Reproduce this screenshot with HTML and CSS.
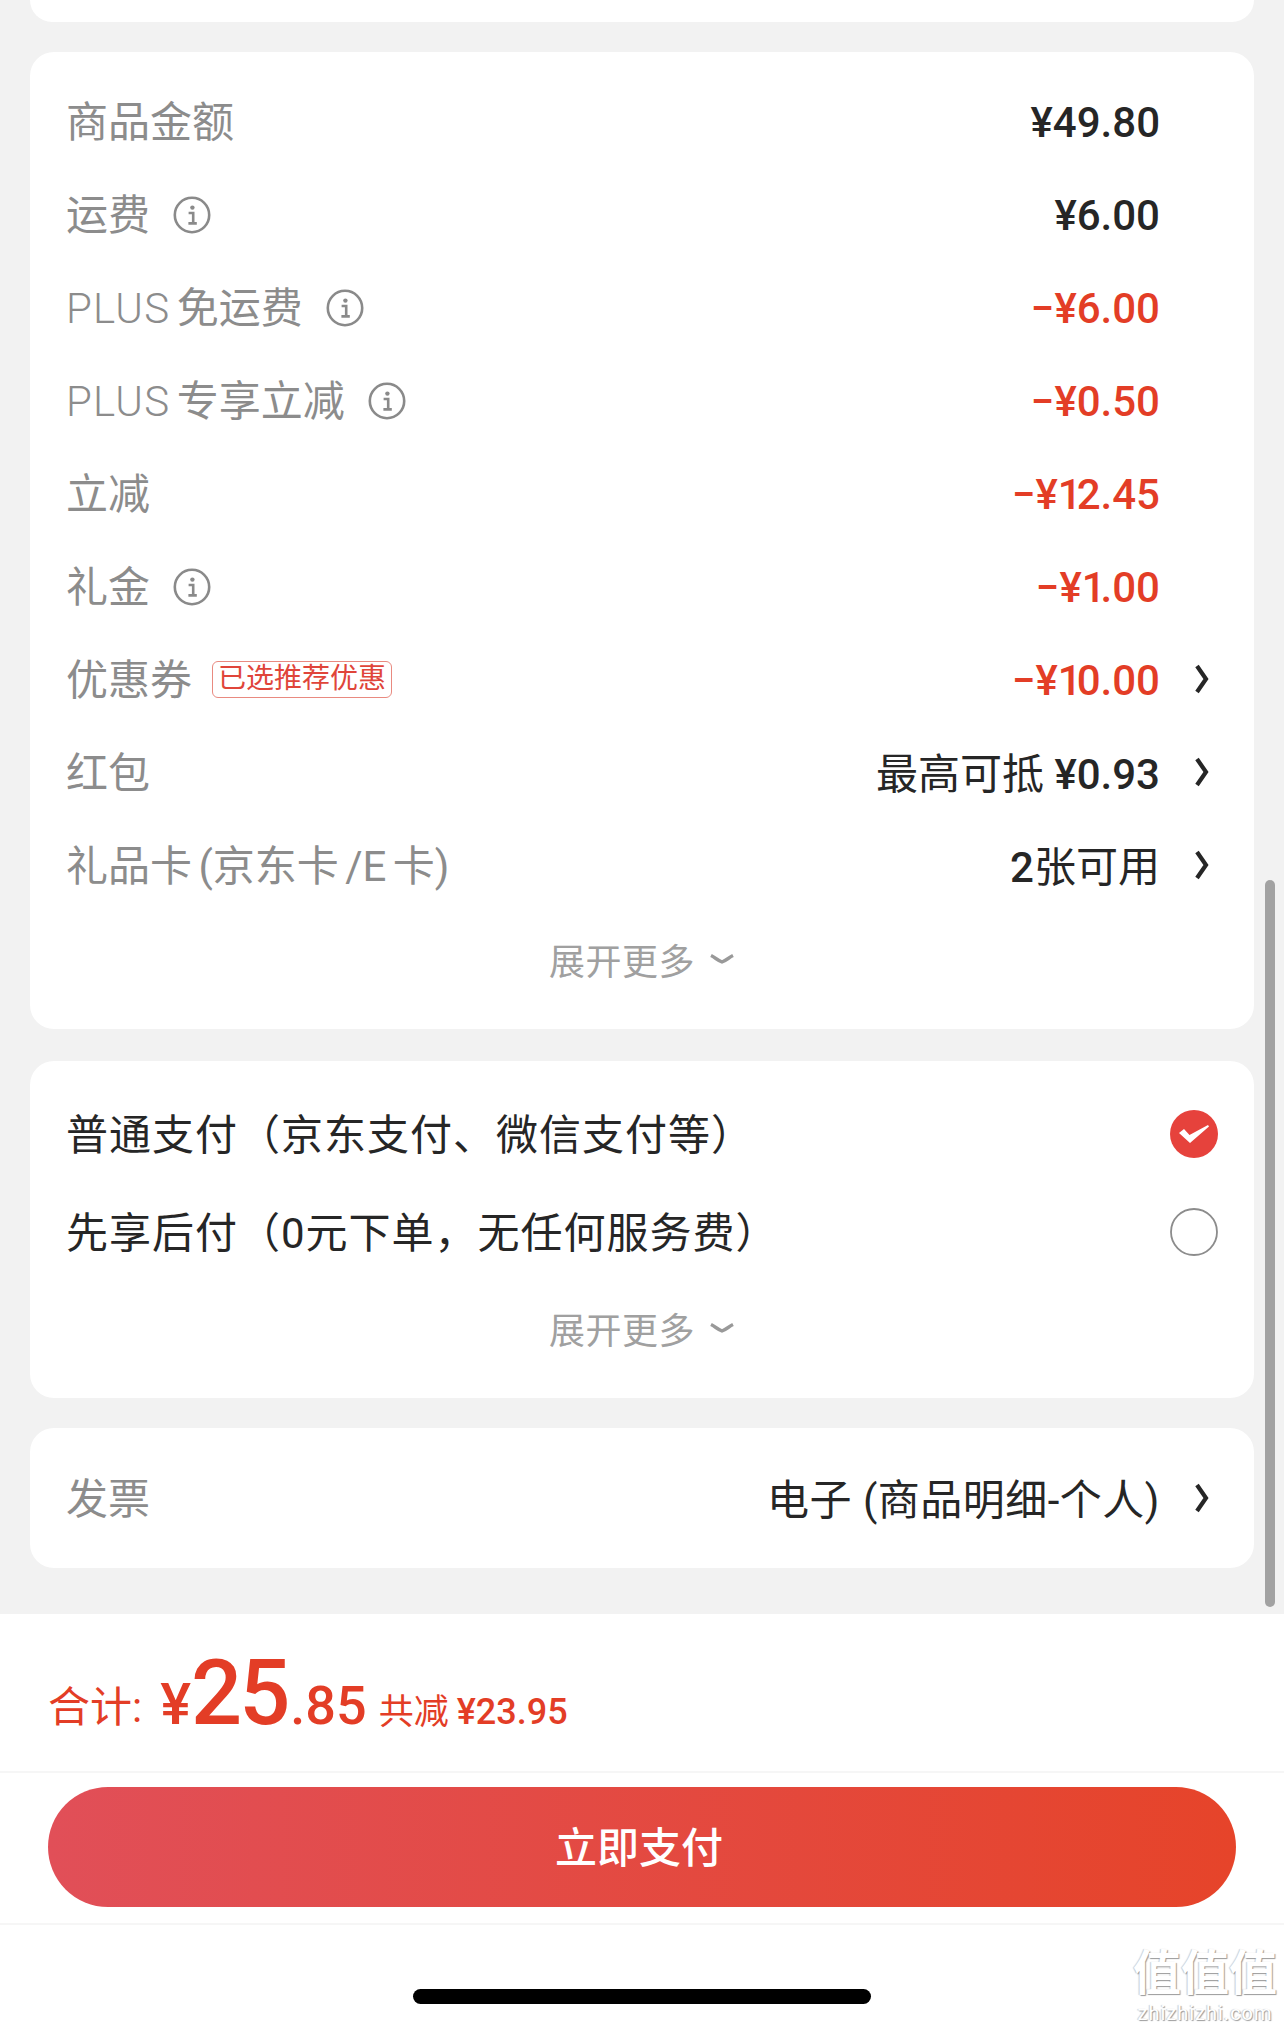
FILE: index.html
```html
<!DOCTYPE html>
<html lang="zh-CN">
<head>
    <meta charset="UTF-8">
    <title>订单结算</title>
    <link rel="stylesheet" href="styles.css">
</head>
<body>
    <svg class="icon-defs" width="0" height="0">
        <symbol id="info" viewBox="0 0 38 38">
            <circle cx="19" cy="19" r="17.2" fill="none" stroke="#8a8a8a" stroke-width="2.6"/>
            <circle cx="19.4" cy="11.6" r="2.2" fill="#8a8a8a"/>
            <path d="M15.6 17h4.6v10M15.4 27.4h8.4" fill="none" stroke="#8a8a8a" stroke-width="2.6"/>
        </symbol>
        <symbol id="arrow" viewBox="0 0 16 32">
            <path d="M3 3l9 13-9 13" fill="none" stroke="#262626" stroke-width="4.2"/>
        </symbol>
        <symbol id="down" viewBox="0 0 26 12">
            <path d="M2 2.5c4 2 7 5 11 6.5 4-1.500 7-4.500 11-6.500" fill="none" stroke="#999" stroke-width="3.400"/>
        </symbol>
    </svg>

    <div class="page">
        <main class="main">
            <div class="card card-stub"></div>

            <section class="card card-fees">
                <div class="row"><span class="label">商品金额</span><span class="value">¥49.80</span><span class="slot"></span></div>
                <div class="row"><span class="label">运费</span><svg class="info"><use href="#info"/></svg><span class="value">¥6.00</span><span class="slot"></span></div>
                <div class="row"><span class="label"><span class="latin">PLUS</span> 免运费</span><svg class="info"><use href="#info"/></svg><span class="value red">−¥6.00</span><span class="slot"></span></div>
                <div class="row"><span class="label"><span class="latin">PLUS</span> 专享立减</span><svg class="info"><use href="#info"/></svg><span class="value red">−¥0.50</span><span class="slot"></span></div>
                <div class="row"><span class="label">立减</span><span class="value red">−¥<span class="tight">1</span>2.45</span><span class="slot"></span></div>
                <div class="row"><span class="label">礼金</span><svg class="info"><use href="#info"/></svg><span class="value red">−¥<span class="tight">1</span>.00</span><span class="slot"></span></div>
                <div class="row"><span class="label">优惠券</span><span class="tag">已选推荐优惠</span><span class="value red">−¥<span class="tight">1</span>0.00</span><span class="slot"><svg class="arrow"><use href="#arrow"/></svg></span></div>
                <div class="row"><span class="label">红包</span><span class="value mixed"><span class="cjk">最高可抵</span> ¥0.93</span><span class="slot"><svg class="arrow"><use href="#arrow"/></svg></span></div>
                <div class="row"><span class="label">礼品卡 (京东卡 /E 卡)</span><span class="value mixed">2<span class="cjk">张可用</span></span><span class="slot"><svg class="arrow"><use href="#arrow"/></svg></span></div>
                <div class="more">展开更多<svg class="down"><use href="#down"/></svg></div>
            </section>

            <section class="card card-pay">
                <div class="pay-row">
                    <span>普通支付（京东支付、微信支付等）</span>
                    <svg class="radio" viewBox="0 0 48 48">
                        <circle cx="24" cy="24" r="24" fill="#e6423c"/>
                        <path d="M9 23l5-4 5.500 6L38 15l1 1.500L20 33z" fill="#fff"/>
                    </svg>
                </div>
                <div class="pay-row">
                    <span>先享后付（0元下单，无任何服务费）</span>
                    <svg class="radio" viewBox="0 0 48 48">
                        <circle cx="24" cy="24" r="23" fill="none" stroke="#8c8c8c" stroke-width="1.800"/>
                    </svg>
                </div>
                <div class="more">展开更多<svg class="down"><use href="#down"/></svg></div>
            </section>

            <section class="card card-invoice">
                <div class="row"><span class="label">发票</span><span class="value mixed"><span class="cjk wide">电子 (商品明细-个人)</span></span><span class="slot"><svg class="arrow"><use href="#arrow"/></svg></span></div>
            </section>
        </main>

        <footer class="footer">
            <div class="total">
                <span class="total-label">合计:</span>
                <span class="yen">¥</span><span class="big">25</span><span class="cents">.85</span>
                <span class="saved-label">共减</span>
                <span class="saved">¥23.95</span>
            </div>
            <div class="action"><div class="pay-btn">立即支付</div></div>
            <div class="home"><div class="home-bar"></div></div>
        </footer>

        <div class="scrollbar"></div>
        <div class="watermark">
            <div class="wm-big">值值值</div>
            <div class="wm-small">zhizhizhi.com</div>
        </div>
    </div>
</body>
</html>
```

FILE: styles.css
```css
* {
    box-sizing: border-box;
}
body {
    margin: 0;
    background-color: #f2f2f2;
    font-family: Roboto, "Noto Sans CJK SC", sans-serif;
}
.icon-defs {
    position: absolute;
}
.page {
    position: relative;
    width: 1284px;
    height: 2029px;
    overflow: hidden;
    display: flex;
    flex-direction: column;
}
.main {
    height: 1614px;
    padding: 0 30px;
    display: flex;
    flex-direction: column;
    gap: 30px;
    flex: none;
}
.card {
    background-color: #fff;
    border-radius: 24px;
}
.card-stub {
    height: 22px;
    border-radius: 0 0 24px 24px;
}
.card-fees {
    padding: 23px 0 24px 36px;
}
.card-pay {
    height: 337px;
    margin-top: 2px;
    padding: 24px 36px 0 36px;
}
.card-invoice {
    height: 140px;
    padding-left: 36px;
    display: flex;
    align-items: center;
}
.card-invoice .row {
    width: 100%;
}

.row {
    height: 93px;
    display: flex;
    align-items: center;
}
.label {
    font-size: 42px;
    font-weight: 400;
    color: #8c8c8c;
    word-spacing: -4px;
    margin-top: -6px;
}
.latin {
    font-weight: 300;
    letter-spacing: 1.2px;
}
.info {
    width: 38px;
    height: 38px;
    margin-left: 23px;
}
.tag {
    margin-left: 20px;
    height: 37px;
    line-height: 33px;
    padding: 0 5px;
    font-size: 28px;
    color: #e0453a;
    border: 1px solid #e98a80;
    border-radius: 6px;
}
.value {
    margin-left: auto;
    margin-top: 2px;
    font-size: 42px;
    font-weight: 500;
    color: #262626;
}
.value.mixed {
    margin-top: -4px;
}
.cjk {
    font-weight: 400;
}
.wide {
    letter-spacing: 0.5px;
}
.tight {
    letter-spacing: -5px;
}
.red {
    color: #e33d26;
}
.slot {
    width: 94px;
    flex: none;
    display: flex;
    padding-left: 34px;
    margin-top: -1px;
}
.arrow {
    width: 16px;
    height: 32px;
}
.more {
    height: 93px;
    display: flex;
    align-items: center;
    justify-content: center;
    font-size: 36px;
    font-weight: 400;
    letter-spacing: 0.5px;
    color: #a0a0a0;
    padding-right: 36px;
}
.card-pay .more {
    padding-right: 0;
}
.down {
    width: 26px;
    height: 12px;
    margin-left: 14px;
}

.pay-row {
    height: 98px;
    display: flex;
    align-items: center;
    justify-content: space-between;
    font-size: 42px;
    font-weight: 400;
    letter-spacing: 1px;
    color: #262626;
}
.pay-row span {
    margin-top: -6px;
}
.radio {
    width: 48px;
    height: 48px;
}

.footer {
    flex: 1;
    background-color: #fff;
}
.total {
    height: 159px;
    padding: 35px 0 0 48px;
    display: flex;
    align-items: baseline;
    color: #e33d26;
    border-bottom: 2px solid #f6f6f6;
    line-height: 1;
}
.total-label {
    font-size: 42px;
    font-weight: 400;
    margin-right: 18px;
    transform: translateY(-2px);
}
.yen {
    font-size: 58px;
    font-weight: 500;
}
.big {
    font-size: 90px;
    font-weight: 500;
    letter-spacing: -3px;
}
.cents {
    font-size: 54px;
    font-weight: 500;
    margin: 0 12px 0 3px;
}
.saved-label {
    font-size: 35px;
    font-weight: 400;
    margin-right: 8px;
}
.saved {
    font-size: 36px;
    font-weight: 500;
}
.action {
    height: 152px;
    padding: 14px 48px 0;
    border-bottom: 2px solid #f6f6f6;
}
.pay-btn {
    height: 120px;
    border-radius: 60px;
    background: linear-gradient(90deg, #e14f58, #e6442a);
    color: #fff;
    font-size: 42px;
    font-weight: 500;
    display: flex;
    align-items: center;
    justify-content: center;
    padding: 0 6px 6px 0;
}
.home {
    display: flex;
    justify-content: center;
    padding-top: 64px;
}
.home-bar {
    width: 458px;
    height: 15px;
    border-radius: 8px;
    background-color: #000;
}

.scrollbar {
    position: absolute;
    left: 1265px;
    top: 880px;
    width: 10px;
    height: 727px;
    border-radius: 5px;
    background-color: #a2a2a2;
}
.watermark {
    position: absolute;
    left: 1132px;
    top: 1946px;
    width: 146px;
    text-align: center;
    color: #fff;
    text-shadow: 1px 1px 1px #999, -1px 0 1px #ccc;
}
.wm-big {
    font-size: 48px;
    line-height: 56px;
    font-weight: 700;
}
.wm-small {
    font-size: 20px;
    line-height: 22px;
    letter-spacing: 1px;
}
```
